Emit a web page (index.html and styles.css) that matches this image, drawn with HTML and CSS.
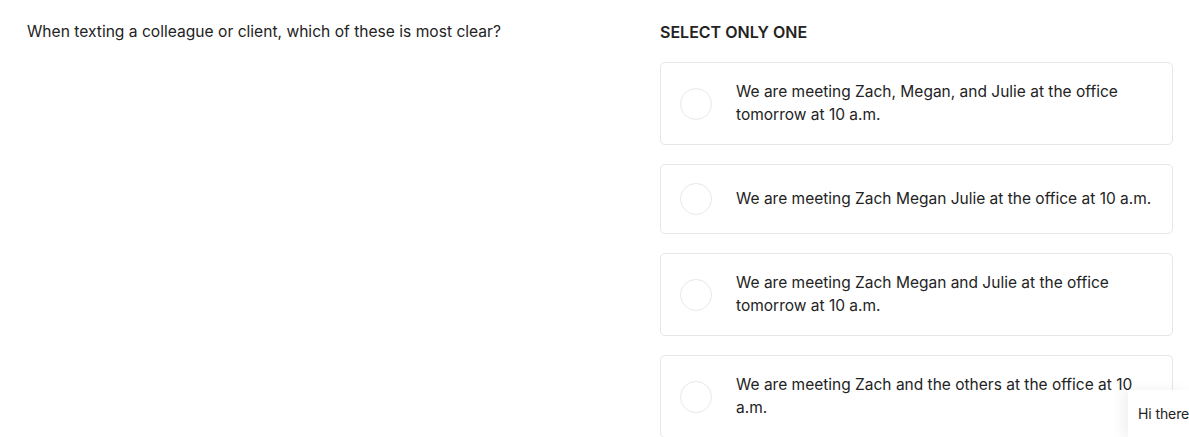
FILE: index.html
```html
<!DOCTYPE html>
<html lang="en">
<head>
    <meta charset="UTF-8">
    <meta name="viewport" content="width=device-width, initial-scale=1.0">
    <title>Question</title>
    <link rel="stylesheet" href="styles.css">
</head>
<body>
    <div class="quiz">
        <div class="prompt">
            <p class="question">When texting a colleague or client, which of these is most clear?</p>
        </div>
        <div class="answers">
            <p class="hint">SELECT ONLY ONE</p>
            <div class="options">
                <label class="option">
                    <span class="radio"></span>
                    <span class="option-text">We are meeting Zach, Megan, and Julie at the office tomorrow at 10 a.m.</span>
                </label>
                <label class="option">
                    <span class="radio"></span>
                    <span class="option-text">We are meeting Zach Megan Julie at the office at 10 a.m.</span>
                </label>
                <label class="option">
                    <span class="radio"></span>
                    <span class="option-text">We are meeting Zach Megan and Julie at the office tomorrow at 10 a.m.</span>
                </label>
                <label class="option">
                    <span class="radio"></span>
                    <span class="option-text">We are meeting Zach and the others at the office at 10 a.m.</span>
                </label>
            </div>
        </div>
    </div>

    <!-- chat widget -->
    <div class="chat-bubble">Hi there</div>
</body>
</html>
```

FILE: styles.css
```css
/* Quiz page */
body {
    font-family: Inter, "Liberation Sans", Arial, sans-serif;
    color: #232323;
    background-color: #fff;
    margin: 0;
    padding: 0;
    overflow: hidden;
}

.quiz {
    display: grid;
    grid-template-columns: 633px 513px;
    padding: 22px 0 0 27px;
}

.question {
    margin: 0;
    font-size: 15.6px;
    line-height: 20px;
}

.hint {
    margin: 0 0 20px;
    font-size: 16px;
    font-weight: 600;
    line-height: 20px;
}

.options {
    display: flex;
    flex-direction: column;
    gap: 19px;
}

.option {
    display: flex;
    align-items: center;
    gap: 24px;
    padding: 18px 20px 18px 19px;
    border: 1px solid #e6e6e6;
    border-radius: 5px;
    cursor: pointer;
}

.radio {
    flex: 0 0 auto;
    width: 30px;
    height: 30px;
    border: 1px solid #e8e8e8;
    border-radius: 50%;
}

.option-text {
    font-size: 15.5px;
    line-height: 22.5px;
}

.chat-bubble {
    position: absolute;
    right: 0;
    top: 390px;
    width: 51px;
    height: 47px;
    padding-left: 10px;
    background-color: #fff;
    box-shadow: -6px 0 12px rgba(0, 0, 0, 0.06);
    font-size: 14px;
    letter-spacing: -0.1px;
    line-height: 47px;
    white-space: nowrap;
}
```
